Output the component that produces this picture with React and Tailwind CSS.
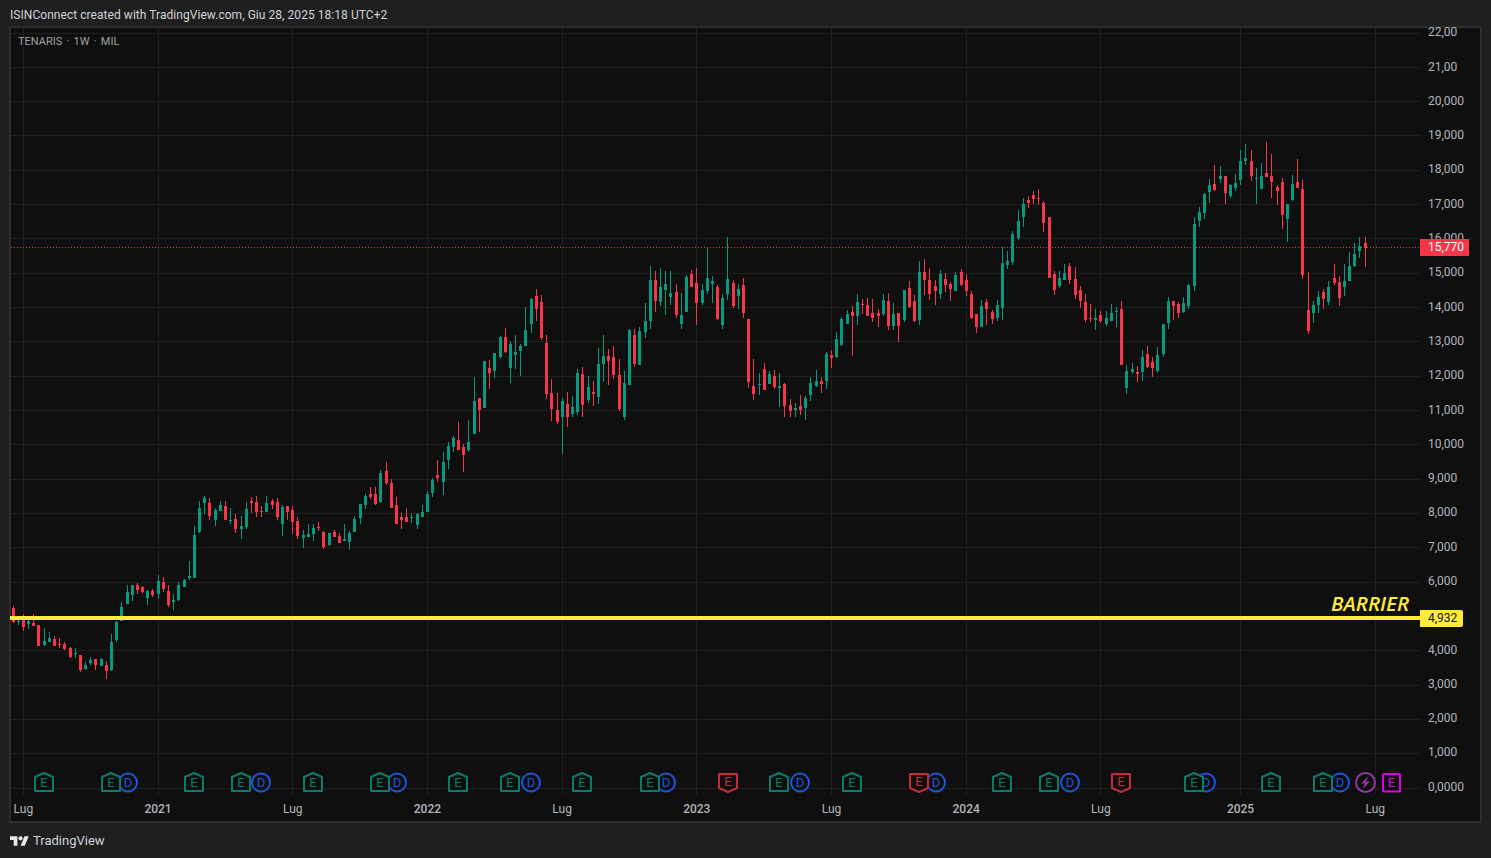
import React from "react";

const RED = "#f7364a";
const GREEN = "#089981";

// candles read off the chart: [x, red?, high, bodyTop, bodyBottom, low]
const seg1 = [
  [40,1,378,384,426,429],[55,0,420,424,427,435],[70,1,402,417,441,453],[85,0,417,423,432,447],[100,1,402,430,438,438],[115,1,435,435,498,498],
  [133,0,444,483,495,498],[148,0,456,474,486,486],[163,1,468,477,498,498],[178,1,474,491,495,504],[193,1,486,492,507,510],[211,1,501,504,531,534],
  [226,0,504,519,522,534],[241,1,525,525,570,576],[256,0,546,555,567,570],[271,0,531,540,549,555],[286,1,537,537,555,570],[304,0,534,537,558,558],
  [319,1,543,555,573,597],[334,0,462,486,570,573],[349,0,423,426,480,486],[364,0,366,381,423,423],[382,0,315,336,372,372],[397,0,315,315,345,363],
  [412,1,309,315,330,342],[427,1,318,321,336,339],[442,0,330,333,354,375],[457,1,327,333,345,351],[475,0,285,303,342,357],[490,1,291,306,327,336],
  [505,1,315,333,375,381],[520,0,342,360,366,390],[535,0,306,315,360,363],[553,0,297,300,321,321],[568,0,243,288,294,300],[583,0,138,165,294,294],
  [598,0,63,84,156,159],[613,0,48,54,69,102],[628,1,54,69,108,120],[646,0,84,90,120,138],[661,0,63,75,93,93],[676,1,63,78,120,120],
  [691,0,84,120,123,132],[706,1,102,117,147,159],[724,0,108,138,147,177],[739,0,66,87,141,147],
];

const seg2 = [
  [4,1,651,663,669,699],[19,1,648,666,696,711],[34,1,678,693,695,711],[49,0,648,669,696,696],[67,1,657,663,675,687],[82,1,654,666,711,720],
  [97,0,675,681,732,768],[112,1,678,678,696,720],[127,1,678,690,726,762],[142,1,711,723,768,777],[160,0,750,765,774,804],[175,0,732,762,771,771],
  [190,0,732,744,762,783],[205,1,726,741,744,753],[220,1,753,756,801,807],[238,0,759,759,795,798],[253,1,750,756,771,771],[268,1,759,768,789,789],
  [283,0,732,777,783,783],[298,0,753,759,786,810],[313,0,708,717,756,756],[331,0,672,672,714,732],[346,0,642,648,675,687],[361,1,621,642,651,657],
  [376,1,621,642,672,675],[391,0,570,579,666,669],[409,1,546,573,609,615],[424,1,597,609,684,684],[439,1,651,675,732,732],[454,1,699,711,720,747],
  [469,1,684,711,726,726],[484,0,699,711,714,729],[502,0,699,702,735,747],[517,0,675,696,711,711],[532,0,633,642,696,696],[547,0,594,600,639,651],
  [562,1,540,585,594,606],[580,0,516,546,606,645],[595,0,486,498,540,567],[610,0,468,474,501,516],[625,1,426,480,510,510],[640,1,492,501,525,576],
  [655,0,420,486,510,516],[673,0,291,363,462,462],[688,1,354,354,390,456],[703,0,243,243,384,384],[718,1,240,264,279,327],[733,0,219,219,273,294],
  [751,0,168,171,231,237],[766,1,144,171,216,219],[781,0,183,192,264,309],[796,0,165,216,225,267],[811,0,192,198,213,288],[826,0,81,150,198,198],
  [844,0,54,57,132,159],[859,1,27,48,87,123],[874,1,45,66,174,180],[889,1,165,189,342,357],
];

const seg3 = [
  [34,1,447,489,537,573],[52,1,489,540,576,582],[67,0,504,513,561,672],[82,1,486,522,561,591],[97,0,498,531,552,561],[112,0,417,429,546,555],
  [127,1,411,432,525,561],[145,0,438,471,510,519],[160,1,453,486,492,528],[175,0,354,402,501,522],[190,0,315,378,402,456],[205,1,357,378,393,465],
  [220,1,348,381,435,447],[238,1,387,435,537,543],[253,0,423,459,561,570],[268,0,297,300,465,465],[283,1,297,315,402,411],[298,0,291,303,405,405],
  [316,0,219,273,306,324],[331,0,108,150,273,297],[346,1,123,150,213,246],[361,0,114,171,216,228],[376,0,123,162,180,255],[391,0,123,189,201,225],
  [409,1,162,186,255,264],[424,0,189,255,282,297],[439,0,135,141,246,246],[454,1,120,132,171,171],[469,1,114,159,219,285],[487,0,162,180,219,225],
  [502,0,54,144,183,192],[517,0,138,153,162,219],[532,1,165,171,267,270],[547,0,192,204,285,297],[562,0,21,147,192,210],[580,1,150,159,228,234],
  [595,0,162,177,198,237],[610,1,144,165,249,264],[625,1,267,267,456,474],[640,1,387,468,492,510],[658,0,429,462,465,495],[673,1,399,417,480,480],
  [688,0,423,432,462,462],[703,1,420,438,471,477],[718,0,429,468,474,531],[733,1,459,462,528,561],[751,1,507,525,543,561],[766,0,519,534,540,561],
  [781,1,495,528,540,555],[796,0,498,504,534,570],[811,0,441,459,495,513],[829,0,420,453,468,471],[844,1,441,453,462,489],[859,0,366,372,453,477],
  [874,1,360,375,384,414],[889,0,306,327,381,384],
];

const seg4 = [
  [4,0,411,417,495,498],[22,0,390,402,432,432],[37,1,378,396,408,528],[52,0,342,366,408,435],[67,1,357,372,375,402],[82,1,354,375,408,408],
  [97,1,357,399,414,426],[115,1,387,399,408,441],[130,0,342,360,402,408],[145,1,339,363,438,450],[160,0,369,402,438,450],[175,1,399,399,438,486],
  [193,0,330,330,420,426],[208,1,303,324,381,384],[223,1,345,363,423,426],[238,0,243,276,420,435],[253,1,237,276,300,345],[268,1,264,300,342,360],
  [286,1,300,318,333,375],[301,0,270,282,342,357],[316,1,279,297,315,336],[331,1,306,312,327,363],[346,0,276,285,333,333],[364,1,267,276,315,318],
  [379,1,282,300,333,348],[394,1,333,342,414,417],[409,1,402,402,441,459],[424,0,360,378,441,441],[439,1,357,366,387,435],[457,1,390,396,417,432],
  [472,0,360,375,414,423],[487,0,201,249,384,420],[502,0,213,243,255,267],[517,0,153,162,246,255],[535,0,90,123,174,180],[550,0,54,72,111,141],
  [565,1,48,60,69,84],[580,1,33,45,57,72],[595,1,27,54,56,75],[610,1,63,69,129,156],[628,1,111,111,294,294],[643,1,273,282,330,345],
  [658,0,273,294,318,324],[673,0,252,279,300,300],[688,1,249,258,300,312],[706,1,261,297,345,357],[721,1,318,330,363,384],[736,1,342,366,420,426],
  [751,1,372,414,417,426],[766,0,387,414,420,450],[781,1,393,405,423,429],[799,0,393,414,432,438],[814,0,372,399,423,423],[829,0,381,393,396,441],
  [844,1,363,387,555,555],[859,0,555,573,624,642],[877,0,549,567,576,582],[892,1,558,576,582,606],
];

const seg5 = [
  [37,0,660,681,726,753],[52,1,648,672,711,714],[67,1,681,696,714,741],[82,0,651,675,723,729],[100,0,582,582,672,681],[115,0,501,513,579,597],
  [130,1,513,513,528,570],[145,1,516,522,549,564],[160,0,501,519,546,549],[175,0,462,465,528,537],[193,0,261,282,468,483],[208,0,231,246,273,291],
  [223,0,189,192,249,267],[238,0,147,165,186,219],[253,1,105,162,180,183],[271,0,108,138,147,159],[286,1,138,138,189,222],[301,0,162,165,198,204],
  [316,0,132,159,174,183],[331,0,60,93,150,165],[346,0,42,84,93,105],[364,1,60,93,138,153],[379,0,114,144,147,222],[394,0,99,138,177,177],
  [409,1,36,129,141,141],[424,1,72,138,156,204],[442,1,165,171,183,225],[457,1,144,156,255,297],[472,0,222,222,267,336],[487,0,135,162,210,213],
  [502,1,87,156,174,174],[517,1,150,177,435,447],[535,1,426,540,603,612],[550,0,513,525,549,579],[565,0,483,501,525,549],[580,1,477,486,507,537],
  [595,0,453,471,516,525],[613,1,402,444,459,465],[628,1,438,456,504,528],[643,0,402,453,471,498],[658,0,366,408,453,453],[673,0,339,372,408,411],
  [688,0,321,348,363,384],[706,1,321,339,354,411],
];

const toPage = (rows, x0, y0) =>
  rows.map(([x, red, hi, top, bot, lo]) => ({
    x: Math.floor(x / 3 + x0),
    red,
    hi: Math.round(hi / 3 + y0),
    top: Math.round(top / 3 + y0),
    bot: Math.round(bot / 3 + y0),
    lo: Math.round(lo / 3 + y0),
  }));

const candles = [
  ...toPage(seg1, 0, 480),
  ...toPage(seg2, 250, 280),
  ...toPage(seg3, 540, 230),
  ...toPage(seg4, 840, 180),
  ...toPage(seg5, 1130, 130),
];

// the 5,000 slot sits fully under the yellow badge, so it stays empty
const prices = [
  "22,00", "21,00", "20,000", "19,000", "18,000", "17,000", "16,000", "15,000", "14,000", "13,000", "12,000", "11,000",
  "10,000", "9,000", "8,000", "7,000", "6,000", "", "4,000", "3,000", "2,000", "1,000", "0,0000",
];

const timeLabels = ["Lug", "2021", "Lug", "2022", "Lug", "2023", "Lug", "2024", "Lug"];
const verticals = [23.5, 158.5, 292.5, 427.5, 562.5, 696.5, 831.5, 966.5, 1100.5, 1240.5, 1375.5];

// earnings (E) and dividend (D) marks on the time scale
const dividends = [128, 261, 397, 531, 666, 800, 936, 1070, 1206, 1340];
const earnings = [44, 111, 194, 241, 313, 380, 458, 510, 582, 650, 779, 852, 1002, 1049, 1194, 1271, 1323];
const badEarnings = [728, 919, 1121];

const Mark = ({ x, y, color, label }) => (
  <text
    x={x}
    y={y}
    fill={color}
    fontSize="13"
    textAnchor="middle"
    fontFamily="Roboto, sans-serif"
  >
    {label}
  </text>
);

const Chart = () => (
  <svg viewBox="11 28 1409 767" className="w-[1409px] h-[767px] overflow-visible block">
    {prices.map((_, i) => (
      <rect key={i} x="11" y={Math.floor(33 + i * 34.33)} width="1409" height="1" fill="#1f1f1f" shapeRendering="crispEdges" />
    ))}
    {verticals.map((x) => (
      <rect key={x} x={x - 0.5} y="28" width="1" height="767" fill="#1f1f1f" shapeRendering="crispEdges" />
    ))}
    <line x1="11" y1="247.5" x2="1420" y2="247.5" stroke={RED} strokeWidth="1" strokeDasharray="1 2" />
    {candles.map((c, i) => (
      <g key={i} fill={c.red ? RED : GREEN} shapeRendering="crispEdges">
        <rect x={c.x} y={c.hi} width="1" height={Math.max(c.lo - c.hi, 1)} />
        <rect x={c.x - 1} y={c.top} width="3" height={Math.max(c.bot - c.top, 1)} />
      </g>
    ))}
    <rect x="10" y="616" width="1410" height="4" fill="#ffeb3b" shapeRendering="crispEdges" />
    {dividends.map((x) => (
      <g key={x}>
        <circle cx={x} cy="782.5" r="9" fill="#0f0f0f" stroke="#1c55e0" strokeWidth="2" />
        <Mark x={x} y="787" color="#1c55e0" label="D" />
      </g>
    ))}
    {earnings.map((x) => (
      <g key={x}>
        <path
          d={`M${x - 9} 777 L${x} 773 L${x + 9} 777 V791 H${x - 9} Z`}
          fill="#0f0f0f"
          stroke="#0a7d69"
          strokeWidth="2"
          strokeLinejoin="round"
        />
        <Mark x={x} y="787" color="#0a7d69" label="E" />
      </g>
    ))}
    {badEarnings.map((x) => (
      <g key={x}>
        <path
          d={`M${x - 9} 774 H${x + 9} V788 L${x} 792 L${x - 9} 788 Z`}
          fill="#0f0f0f"
          stroke="#c42b3a"
          strokeWidth="2"
          strokeLinejoin="round"
        />
        <Mark x={x} y="786" color="#c42b3a" label="E" />
      </g>
    ))}
    <circle cx="1365.5" cy="782.5" r="9.5" fill="#0f0f0f" stroke="#8e3a9f" strokeWidth="2" />
    <path d="M1368.5 776 L1361 783.5 H1365 L1362.5 789 L1370 781.5 H1366 Z" fill="#8e3a9f" />
    <rect x="1383" y="774" width="17" height="17.5" rx="1" fill="#0f0f0f" stroke="#e000e8" strokeWidth="2" />
    <Mark x="1391.5" y="787" color="#e000e8" label="E" />
  </svg>
);

const App = () => {
  return (
    <div className="w-full h-screen overflow-hidden bg-[#1f1f1f] font-['Roboto',sans-serif] text-xs text-[#d1d4dc]">
      <div className="h-[26px] pl-[10px] pt-[4px] flex items-center tracking-[0.05px]">
        ISINConnect created with TradingView.com, Giu 28, 2025 18:18 UTC+2
      </div>

      <div className="ml-[9px] w-[1473px] h-[797px] border-2 border-[#2e2e2e] bg-[#0f0f0f] flex">
        <div className="relative w-[1409px] shrink-0">
          <Chart />
          <div className="absolute left-[7px] top-[6px] text-[11px] leading-[16px] [word-spacing:1.5px] text-[#a3a3a3]">TENARIS · 1W · MIL</div>
          <div className="absolute right-[11px] top-[563px] text-[20.5px] leading-[24px] italic font-semibold text-[#ffeb3b] font-['Open_Sans',sans-serif]">
            BARRIER
          </div>
          <div className="flex h-[27px] items-center text-[#b2b5be] pt-[1px] -ml-[55px]">
            {timeLabels.map((label, i) => (
              <div
                key={i}
                className={label === "Lug" ? "w-[134.7px] shrink-0 text-center" : "w-[134.7px] shrink-0 text-center font-medium"}
              >
                {label}
              </div>
            ))}
            <div className="w-[134.7px] shrink-0 ml-[5px] text-center font-medium">2025</div>
            <div className="w-[134.7px] shrink-0 text-center">Lug</div>
          </div>
        </div>

        <div className="relative flex-1 -mt-[2.75px] pl-[8px] flex flex-col gap-[20.3px] text-[#b2b5be]">
          {prices.map((p, i) => (
            <div key={i} className="h-[14px] leading-[14px]">
              {p}
            </div>
          ))}
          <div className="absolute left-0 top-[214px] w-[49px] h-[17px] pl-[8px] bg-[#f7364a] text-white leading-[17px]">
            15,770
          </div>
          <div className="absolute left-0 top-[585px] w-[43px] h-[17px] pl-[8px] bg-[#ffeb3b] text-[#131722] leading-[17px] rounded-r-[2px]">
            4,932
          </div>
        </div>
      </div>

      <div className="h-[33px] pl-[10px] pt-[2px] flex items-center gap-[4px] text-[13px] text-[#d1d4dc]">
        <svg viewBox="0 4 36 18" className="w-[19px] h-[10px]" fill="#e8e8e8">
          <path d="M14 22H7V11H0V4h14v18zM28 22h-8l7.5-18h8L28 22z" />
          <circle cx="20" cy="8" r="4" />
        </svg>
        <span>TradingView</span>
      </div>
    </div>
  );
};

export default App;
